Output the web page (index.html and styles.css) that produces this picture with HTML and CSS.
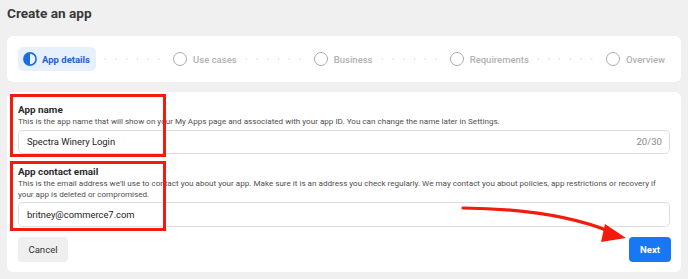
FILE: index.html
```html
<!DOCTYPE html>
<html>
<head>
<meta charset="utf-8">
<link rel="stylesheet" href="styles.css">
</head>
<body>
<div class="page">
  <h1 class="title">Create an app</h1>
  <div class="stepper">
    <div class="step active">
      <svg class="ico" width="14" height="14" viewBox="0 0 14 14"><circle cx="7" cy="7" r="6.1" fill="none" stroke="#1c6ce0" stroke-width="1.6"/><path d="M7 0.9 A6.1 6.1 0 0 0 7 13.1 Z" fill="#1c6ce0"/></svg>
      <span>App details</span>
    </div>
    <div class="dots"></div>
    <div class="step"><span class="ring"></span><span>Use cases</span></div>
    <div class="dots"></div>
    <div class="step"><span class="ring"></span><span>Business</span></div>
    <div class="dots"></div>
    <div class="step"><span class="ring"></span><span>Requirements</span></div>
    <div class="dots"></div>
    <div class="step"><span class="ring"></span><span>Overview</span></div>
  </div>
  <div class="card">
    <div class="field">
      <div class="label">App name</div>
      <div class="desc">This is the app name that will show on your My Apps page and associated with your app ID. You can change the name later in Settings.</div>
      <div class="input"><span>Spectra Winery Login</span><span class="count">20/30</span></div>
    </div>
    <div class="field second">
      <div class="label">App contact email</div>
      <div class="desc">This is the email address we'll use to contact you about your app. Make sure it is an address you check regularly. We may contact you about policies, app restrictions or recovery if your app is deleted or compromised.</div>
      <div class="input"><span>britney@commerce7.com</span></div>
    </div>
    <div class="actions">
      <button class="btn cancel">Cancel</button>
      <button class="btn next">Next</button>
    </div>
  </div>
  <svg class="annot" width="688" height="279" viewBox="0 0 688 279">
    <rect x="11.5" y="95.5" width="153" height="60" fill="none" stroke="#f21b0e" stroke-width="3"/>
    <rect x="11.5" y="162.5" width="153" height="67" fill="none" stroke="#f21b0e" stroke-width="3"/>
    <path d="M463 208 Q555 209 611 232" fill="none" stroke="#f21b0e" stroke-width="3.2" stroke-linecap="round"/>
    <path d="M605 224 L626 238 L601 242 Z" fill="#f21b0e"/>
  </svg>
</div>
</body>
</html>
```
FILE: styles.css
```css
* { box-sizing: border-box; }
html, body { margin: 0; padding: 0; }
body {
  background: #f0f0f0;
  font-family: Roboto, "Liberation Sans", Arial, sans-serif;
  width: 688px;
  height: 279px;
  overflow: hidden;
}
.page {
  position: relative;
  padding: 0 7px;
  height: 279px;
}
.title {
  margin: 0;
  padding-top: 3px;
  height: 36px;
  font-size: 13.6px;
  line-height: 20px;
  font-weight: 700;
  color: #383838;
}
.stepper {
  background: #fff;
  border-radius: 6px;
  height: 46px;
  display: flex;
  align-items: center;
  padding: 0 16px 0 11px;
}
.step {
  display: flex;
  align-items: center;
  gap: 6px;
  font-size: 9.5px;
  font-weight: 500;
  color: #b2b2b2;
  white-space: nowrap;
}
.step.active {
  background: #e7f0fd;
  border-radius: 5px;
  height: 24px;
  padding: 0 6px 0 5px;
  gap: 5px;
  color: #1f61cc;
  font-weight: 700;
}
.ico { display: block; }
.ring {
  width: 14px;
  height: 14px;
  border-radius: 50%;
  border: 1.5px solid #ababab;
}
.dots {
  flex: 1;
  height: 2px;
  margin: 0 5px 0 4px;
  background-image: radial-gradient(circle, #dedede 0.9px, transparent 1.1px);
  background-size: 10.7px 2px;
  background-position: left center;
}
.card {
  margin-top: 10px;
  background: #fff;
  border-radius: 6px;
  height: 180px;
  padding: 11px 10px 0 11px;
}
.label {
  font-size: 9.9px;
  line-height: 13px;
  font-weight: 700;
  color: #2b2b2b;
}
.desc {
  font-size: 8.1px;
  line-height: 11.5px;
  color: #4f4f4f;
}
.input {
  margin-top: 2px;
  margin-right: 1px;
  height: 24px;
  border: 1px solid #dedede;
  border-radius: 5px;
  display: flex;
  align-items: center;
  justify-content: space-between;
  padding: 0 7px 0 8px;
  font-size: 9.4px;
  color: #222;
}
.count { color: #8a8a8a; font-size: 9.6px; }
.field.second { margin-top: 11px; }
.field.second .input { margin-top: 1px; height: 25px; }
.actions {
  display: flex;
  justify-content: space-between;
  margin-top: 10px;
}
.btn {
  border: none;
  height: 25px;
  border-radius: 4px;
  font-family: Roboto, "Liberation Sans", Arial, sans-serif;
  font-size: 9.6px;
  padding: 0;
}
.cancel {
  width: 50px;
  background: #efefef;
  color: #333;
}
.next {
  width: 42px;
  background: #1877f2;
  color: #fff;
  font-weight: 700;
}
.annot {
  position: absolute;
  left: 0;
  top: 0;
  pointer-events: none;
}
```
